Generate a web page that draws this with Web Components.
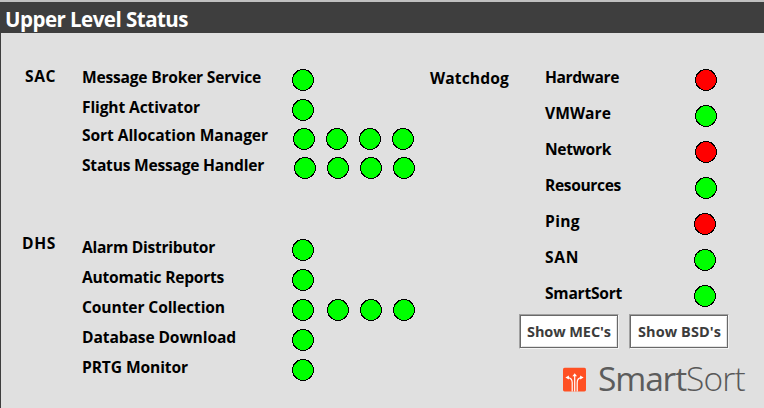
<!DOCTYPE html>
<html lang="en">
<head>
<meta charset="utf-8">
<title>Upper Level Status</title>
<style>
html,body{margin:0;width:764px;height:408px;overflow:hidden;background:#e0e0e0}
body{font-family:"Open Sans","Noto Sans",sans-serif}
</style>
</head>
<body>
<status-app></status-app>
<script>
const define = (name, html, setup) => customElements.define(name, class extends HTMLElement {
  connectedCallback() {
    if (this.shadowRoot) return;
    this.attachShadow({mode: 'open'}).innerHTML = html;
    if (setup) setup(this, this.shadowRoot);
  }
});

// Text whose letter spacing is tuned so that it fills the width given by "w".
define('fit-text', `<style>
:host{display:block;white-space:nowrap;height:20px;line-height:20px;font-size:15.6px;font-weight:700;color:#000}
span{display:inline-block;white-space:nowrap}
</style><span></span>`, (el, root) => {
  const s = root.querySelector('span');
  s.textContent = el.getAttribute('text');
  const natural = s.getBoundingClientRect().width;
  s.style.letterSpacing = (Number(el.getAttribute('w')) - natural) / s.textContent.length + 'px';
});

define('status-lamp', `<style>
:host{display:block;width:22px;height:22px;flex:none}
svg{display:block}
</style><svg width="22" height="22" shape-rendering="crispEdges"><circle cx="11" cy="11" r="10.5" stroke="#000"/></svg>`,
(el, root) => root.querySelector('circle').setAttribute('fill', el.hasAttribute('fault') ? '#f00' : '#0f0'));

define('lamp-row', `<style>
:host{display:flex;height:22px;gap:11px}
</style><slot></slot>`);

define('label-list', `<style>
:host{display:flex;flex-direction:column;gap:var(--gap,10px)}
</style><slot></slot>`);

define('title-bar', `<style>
:host{display:block;box-sizing:border-box;height:33px;border-top:2px solid #c0c0c0;background:#3e3e3e;padding:4px 0 0 5px}
fit-text{font-size:20.5px;color:#fff;height:26px;line-height:26px}
</style><fit-text text="Upper Level Status" w="183"></fit-text>`);

define('push-button', `<style>
:host{display:block;box-sizing:border-box;width:100px;height:35px;border:1px solid;border-color:#a0a0a0 #f4f4f4 #f4f4f4 #a0a0a0}
button{display:block;box-sizing:border-box;width:98px;height:33px;margin:0;padding:1px 0 0 var(--inset,6px);border:1px solid #696969;background:#fff;text-align:left;font-family:inherit;box-shadow:inset 1px 1px #fff,inset -1px -1px #e3e3e3}
fit-text{font-size:14.5px;color:#3c3c3c}
</style><button><fit-text></fit-text></button>`, (el, root) => {
  const old = root.querySelector('fit-text');
  const t = document.createElement('fit-text');
  t.setAttribute('text', el.getAttribute('text'));
  t.setAttribute('w', el.getAttribute('w'));
  old.replaceWith(t);
});

define('brand-logo', `<style>
:host{display:flex}
svg{display:block;margin-top:13px;flex:none}
fit-text{font-size:33.5px;line-height:48px;height:48px;font-weight:400;color:#5c5c5c}
.a{margin-left:11px;width:88px}
.b{font-weight:300;color:#585858}
</style>
<svg width="25" height="25" viewBox="0 0 25 25"><rect x="1" y=".8" width="23" height="23.6" rx="1.6" fill="#ff5023"/>
<g fill="none" stroke="#fff" stroke-width="1.2"><path d="M12.7 24.4V8M10.2 24.4V15.5Q10.2 10.8 5.5 10.6M15.2 24.4V15.5Q15.2 10.8 19.5 10.6"/></g>
<path fill="#fff" d="M12.7 6.2l2.3 3h-4.6zM3.4 10.5l3.5-2.1v4.2zM21.6 10.5l-3.5-2.1v4.2z"/></svg>
<fit-text class="a" text="Smart" w="88"></fit-text><fit-text class="b" text="Sort" w="59"></fit-text>`);

define('status-app', `<style>
:host{display:block;width:764px;height:408px;background:#e0e0e0}
main{box-sizing:border-box;height:375px;border-left:1px solid #3e3e3e;display:grid;grid-template-columns:428px 335px}
.left{display:grid;grid-template-rows:170px 205px}
section{display:grid;grid-template-columns:81px 210px 137px;align-items:start}
.lamps{display:flex;flex-direction:column;gap:8px;padding-top:36px}
.right{display:flex;flex-direction:column}
.watch{grid-template-columns:116px 149px 70px;height:281px}
.watch .lamps{gap:14px}
.watch label-list{--gap:16px}
.buttons{display:flex;gap:10px;padding-left:90px;height:48px}
brand-logo{padding-left:133px;height:46px;margin-top:-8px}
</style>
<title-bar></title-bar>
<main>
 <div class="left">
  <section>
   <fit-text text="SAC" w="31" style="margin:33px 0 0 24px"></fit-text>
   <label-list style="padding-top:34px">
    <fit-text text="Message Broker Service" w="179"></fit-text>
    <fit-text text="Flight Activator" w="118"></fit-text>
    <fit-text text="Sort Allocation Manager" w="186" style="margin-top:-2px"></fit-text>
    <fit-text text="Status Message Handler" w="182"></fit-text>
   </label-list>
   <div class="lamps">
    <lamp-row><status-lamp></status-lamp></lamp-row>
    <lamp-row><status-lamp></status-lamp></lamp-row>
    <lamp-row style="margin:-1px 0 0 1px"><status-lamp></status-lamp><status-lamp></status-lamp><status-lamp></status-lamp><status-lamp></status-lamp></lamp-row>
    <lamp-row style="margin:-1px 0 0 2px"><status-lamp></status-lamp><status-lamp></status-lamp><status-lamp></status-lamp><status-lamp></status-lamp></lamp-row>
   </div>
  </section>
  <section>
   <fit-text text="DHS" w="34" style="margin:30px 0 0 21px"></fit-text>
   <label-list style="padding-top:34px">
    <fit-text text="Alarm Distributor" w="133"></fit-text>
    <fit-text text="Automatic Reports" w="142"></fit-text>
    <fit-text text="Counter Collection" w="143"></fit-text>
    <fit-text text="Database Download" w="154"></fit-text>
    <fit-text text="PRTG Monitor" w="106"></fit-text>
   </label-list>
   <div class="lamps">
    <lamp-row><status-lamp></status-lamp></lamp-row>
    <lamp-row><status-lamp></status-lamp></lamp-row>
    <lamp-row><status-lamp style="margin-right:2px"></status-lamp><status-lamp></status-lamp><status-lamp></status-lamp><status-lamp></status-lamp></lamp-row>
    <lamp-row><status-lamp></status-lamp></lamp-row>
    <lamp-row><status-lamp></status-lamp></lamp-row>
   </div>
  </section>
 </div>
 <div class="right">
  <section class="watch">
   <fit-text text="Watchdog" w="79" style="margin:35px 0 0 1px"></fit-text>
   <label-list style="padding-top:34px">
    <fit-text text="Hardware" w="74"></fit-text>
    <fit-text text="VMWare" w="66"></fit-text>
    <fit-text text="Network" w="66"></fit-text>
    <fit-text text="Resources" w="76"></fit-text>
    <fit-text text="Ping" w="35"></fit-text>
    <fit-text text="SAN" w="34"></fit-text>
    <fit-text text="SmartSort" w="77"></fit-text>
   </label-list>
   <div class="lamps">
    <status-lamp fault style="margin-left:1px"></status-lamp>
    <status-lamp style="margin-left:1px"></status-lamp>
    <status-lamp fault style="margin-left:1px"></status-lamp>
    <status-lamp style="margin-left:1px"></status-lamp>
    <status-lamp fault></status-lamp>
    <status-lamp></status-lamp>
    <status-lamp></status-lamp>
   </div>
  </section>
  <div class="buttons">
   <push-button text="Show MEC's" w="84"></push-button>
   <push-button text="Show BSD's" w="83" style="--inset:7px"></push-button>
  </div>
  <brand-logo></brand-logo>
 </div>
</main>`);
</script>
</body>
</html>
